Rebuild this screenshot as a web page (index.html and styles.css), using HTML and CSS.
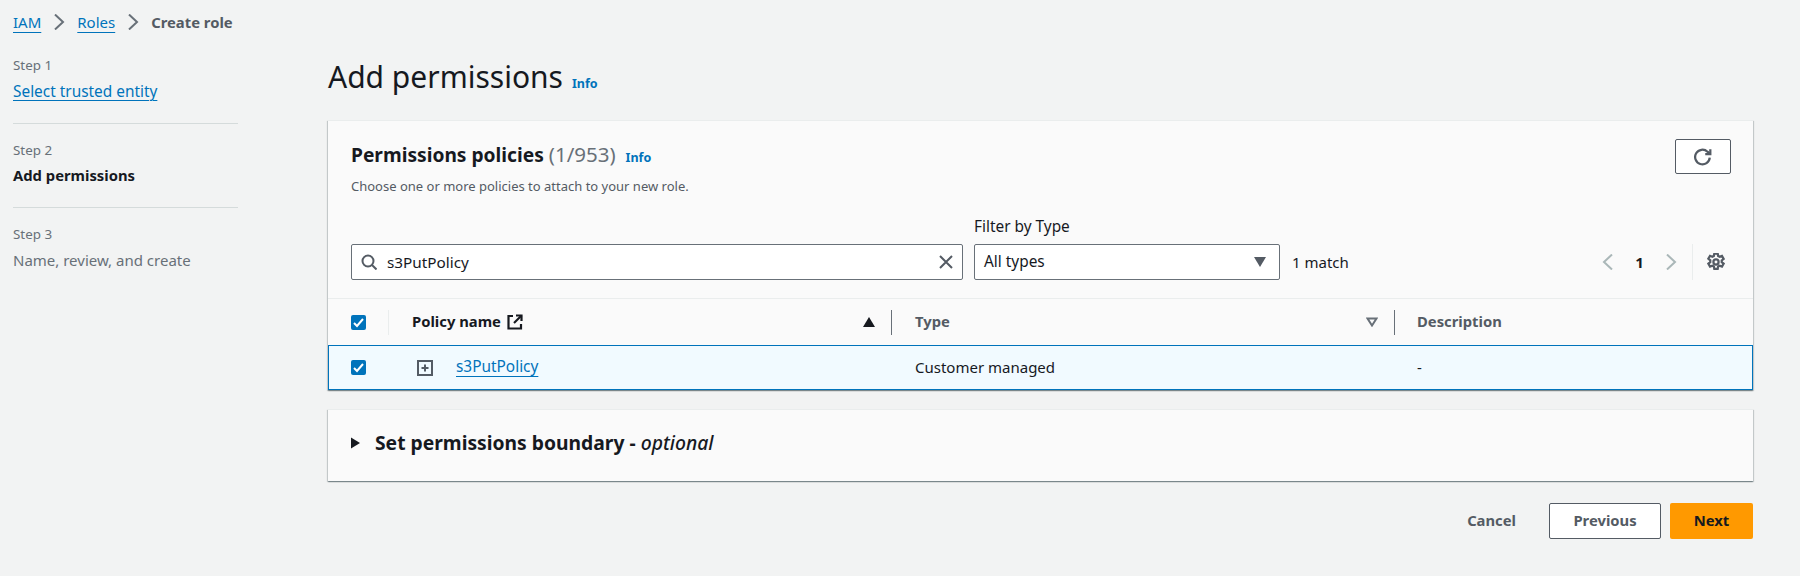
FILE: index.html
```html
<!DOCTYPE html>
<html lang="en">
    <head>
        <meta charset="UTF-8">
        <title>Create role</title>
        <link rel="stylesheet" href="styles.css">
    </head>
    <body>
        <nav class="crumbs">
            <a href="#">IAM</a>
            <svg class="icon crumb-sep" viewBox="0 0 16 16"><path d="M4 0.500L12 8l-8 7.500"/></svg>
            <a href="#">Roles</a>
            <svg class="icon crumb-sep" viewBox="0 0 16 16"><path d="M4 0.500L12 8l-8 7.500"/></svg>
            <span class="crumb-here">Create role</span>
        </nav>

        <div class="layout">
            <aside class="steps">
                <div class="step">
                    <div class="step-num">Step 1</div>
                    <a class="step-link" href="#">Select trusted entity</a>
                </div>
                <div class="step">
                    <div class="step-num">Step 2</div>
                    <div class="step-active">Add permissions</div>
                </div>
                <div class="step">
                    <div class="step-num">Step 3</div>
                    <div class="step-todo">Name, review, and create</div>
                </div>
            </aside>

            <main class="content">
                <div class="page-head">
                    <h1>Add permissions</h1>
                    <a class="info" href="#">Info</a>
                </div>

                <section class="card">
                    <div class="card-head">
                        <div class="title-row">
                            <div>
                                <h2>Permissions policies <span class="count">(1/953)</span> <a class="info" href="#">Info</a></h2>
                                <p class="subtitle">Choose one or more policies to attach to your new role.</p>
                            </div>
                            <button class="btn-refresh">
                                <svg class="icon" viewBox="0 0 16 16"><path d="M14 8.500A6.500 6.500 0 1 1 12 3.300L14.500 5.500"/><path d="M14.500 1v4.500H10"/></svg>
                            </button>
                        </div>
                        <div class="filters">
                            <div class="search">
                                <svg class="icon" viewBox="0 0 16 16"><circle cx="7" cy="7" r="5.500"/><path d="M11 11l4.500 4.500"/></svg>
                                <span class="search-text">s3PutPolicy</span>
                                <svg class="icon" viewBox="0 0 16 16"><path d="M2 2l12 12M14 2L2 14"/></svg>
                            </div>
                            <div class="filter-type">
                                <label>Filter by Type</label>
                                <div class="select">
                                    <span>All types</span>
                                    <svg class="caret" viewBox="0 0 12 10"><path d="M0 0h12L6 10z"/></svg>
                                </div>
                            </div>
                            <div class="matches">1 match</div>
                            <div class="pager">
                                <svg class="icon faint" viewBox="0 0 16 16"><path d="M12 0.500L4 8l8 7.500"/></svg>
                                <span class="page-num">1</span>
                                <svg class="icon faint" viewBox="0 0 16 16"><path d="M4 0.500L12 8l-8 7.500"/></svg>
                                <span class="pager-div"></span>
                                <svg class="icon gear" viewBox="1 1 16 16"><circle cx="9" cy="9" r="2.300"/><path d="M7.500 1.500h3l.4 2.200 1.300.7 2.100-.8 1.500 2.600-1.700 1.400v1.500l1.700 1.400-1.500 2.600-2.100-.8-1.300.7-.4 2.200h-3l-.4-2.200-1.300-.7-2.100.8-1.500-2.600 1.700-1.400V7.500L2.200 6.100l1.500-2.600 2.100.8 1.300-.7z"/></svg>
                            </div>
                        </div>
                    </div>

                    <div class="table-row table-head">
                        <div class="col-check">
                            <span class="checkbox"><svg viewBox="0 0 15 15"><path d="M3 8l3 3 6-7"/></svg></span>
                        </div>
                        <div class="col-name">
                            <span class="th-label">Policy name</span>
                            <svg class="icon dark" viewBox="0 0 16 16"><path d="M9 1.500h5.500V7"/><path d="M14.500 1.500L7 9"/><path d="M6 2H1.500v12.500H14V10"/></svg>
                            <svg class="caret sort" viewBox="0 0 12 10"><path d="M6 0l6 10H0z"/></svg>
                        </div>
                        <div class="col-type">
                            <span class="th-label muted">Type</span>
                            <svg class="caret sort-off" viewBox="0 0 12 10"><path d="M1.500 1.500h9L6 8.500z"/></svg>
                        </div>
                        <div class="col-desc th-label muted">Description</div>
                    </div>
                    <div class="table-row row-selected">
                        <div class="col-check">
                            <span class="checkbox"><svg viewBox="0 0 15 15"><path d="M3 8l3 3 6-7"/></svg></span>
                        </div>
                        <div class="col-name">
                            <svg class="expand" viewBox="0 0 16 16"><rect x="1" y="1" width="14" height="14"/><path d="M8 4.500v7M4.500 8h7"/></svg>
                            <a href="#">s3PutPolicy</a>
                        </div>
                        <div class="col-type">Customer managed</div>
                        <div class="col-desc">-</div>
                    </div>
                </section>

                <section class="card boundary">
                    <svg class="arrow" viewBox="0 0 10 12"><path d="M0 0l10 6-10 6z"/></svg>
                    <h3>Set permissions boundary - <em>optional</em></h3>
                </section>

                <div class="actions">
                    <button class="btn-link">Cancel</button>
                    <button class="btn-normal">Previous</button>
                    <button class="btn-primary">Next</button>
                </div>
            </main>
        </div>
    </body>
</html>
```

FILE: styles.css
```css
* {
    box-sizing: border-box;
}

body {
    margin: 0;
    height: 576px;
    overflow: hidden;
    background-color: #f2f3f3;
    color: #16191f;
    font-family: "Noto Sans", sans-serif;
    font-size: 15px;
    line-height: 20px;
}

a {
    color: #0073bb;
    text-decoration: underline;
    text-decoration-thickness: 1px;
    text-underline-offset: 4px;
}

svg {
    display: block;
    flex: none;
}

.icon {
    width: 16px;
    height: 16px;
    fill: none;
    stroke: #545b64;
    stroke-width: 2;
}

.icon.faint {
    stroke: #aab7b8;
}

.icon.dark {
    stroke: #16191f;
    stroke-width: 2.200;
}

.icon.gear {
    width: 18px;
    height: 18px;
    stroke-width: 2;
}

.caret {
    width: 12px;
    height: 10px;
    fill: #545b64;
}

/* breadcrumbs */
.crumbs {
    display: flex;
    align-items: center;
    gap: 10px;
    height: 20px;
    margin: 12px 0 0 13px;
}

.crumb-sep {
    stroke: #687078;
}

.crumb-here {
    color: #545b64;
    font-size: 14.800px;
    font-weight: 700;
}

/* left side */
.layout {
    display: flex;
    padding-left: 13px;
}

.steps {
    width: 225px;
    margin-right: 90px;
    padding-top: 24px;
}

.step {
    padding-bottom: 21px;
    margin-bottom: 17px;
    border-bottom: 1px solid #d5dbdb;
}

.step:last-child {
    border-bottom: none;
}

.step-num {
    color: #687078;
    font-size: 13.400px;
    line-height: 18px;
    margin-bottom: 7px;
}

.step-link {
    display: inline-block;
    font-size: 15.400px;
    text-underline-offset: 3px;
}

.step-active {
    height: 20px;
    font-size: 14.800px;
    font-weight: 700;
    line-height: 18px;
}

.step-todo {
    color: #687078;
}

/* main */
.content {
    width: 1425px;
}

.page-head {
    display: flex;
    align-items: baseline;
    gap: 9px;
    height: 36px;
    margin: 27px 0 25px;
}

h1 {
    margin: 0;
    font-size: 30px;
    font-weight: 400;
    line-height: 36px;
}

.info {
    font-size: 12.500px;
    font-weight: 700;
    text-decoration: none;
}

.card {
    background-color: #fafafa;
    border-top: 1px solid #eaeded;
    box-shadow: 0 1px 1px 0 rgba(0, 28, 36, 0.3), 1px 1px 1px 0 rgba(0, 28, 36, 0.15), -1px 1px 1px 0 rgba(0, 28, 36, 0.15);
}

.card-head {
    height: 178px;
    padding: 21px 22px 0 23px;
    border-bottom: 1px solid #eaeded;
}

.title-row {
    display: flex;
    justify-content: space-between;
}

h2 {
    margin: 0;
    font-size: 19.200px;
    font-weight: 700;
    line-height: 24px;
}

.count {
    color: #687078;
    font-size: 20.500px;
    font-weight: 400;
}

h2 .info {
    margin-left: 5px;
}

.subtitle {
    margin: 8px 0 0;
    color: #545b64;
    font-size: 13px;
    line-height: 16px;
}

.btn-refresh {
    display: flex;
    align-items: center;
    justify-content: center;
    width: 56px;
    height: 35px;
    margin-top: -3px;
    background-color: #fff;
    border: 1px solid #545b64;
    border-radius: 2px;
}

.btn-refresh .icon {
    width: 18px;
    height: 18px;
}

.filters {
    display: flex;
    align-items: flex-end;
    margin-top: 23px;
}

.search {
    display: flex;
    align-items: center;
    width: 612px;
    height: 36px;
    padding: 0 8px 0 9px;
    background-color: #fff;
    border: 1px solid #687078;
    border-radius: 2px;
}

.search-text {
    flex: 1;
    margin-left: 10px;
    font-size: 15.300px;
}

.filter-type {
    margin-left: 11px;
}

.filter-type label {
    display: block;
    margin-bottom: 7px;
    font-size: 15.400px;
}

.select {
    display: flex;
    align-items: center;
    justify-content: space-between;
    width: 306px;
    height: 36px;
    padding: 0 13px 0 9px;
    background-color: #fff;
    border: 1px solid #687078;
    border-radius: 2px;
    font-size: 15.400px;
}

.matches {
    height: 36px;
    margin-left: 12px;
    line-height: 36px;
}

.pager {
    display: flex;
    align-items: center;
    height: 36px;
    margin-left: auto;
    margin-right: 6px;
}

.page-num {
    width: 47px;
    text-align: center;
    font-weight: 700;
}

.pager-div {
    width: 1px;
    height: 36px;
    margin: 0 14px 0 13px;
    background-color: #eaeded;
}

/* table */
.table-row {
    display: flex;
    align-items: center;
}

.table-head {
    height: 46px;
}

.th-label {
    padding-bottom: 3px;
    font-size: 14.800px;
    font-weight: 700;
}

.muted {
    color: #545b64;
}

.row-selected {
    height: 45px;
    background-color: #f1faff;
    border: 1px solid #0073bb;
}

.row-selected a,
.row-selected .col-type,
.row-selected .col-desc {
    padding-bottom: 2px;
}

.row-selected a {
    font-size: 15.400px;
}

.col-check {
    display: flex;
    align-items: center;
    width: 61px;
    height: 25px;
    padding-left: 23px;
    border-right: 1px solid #eaeded;
}

.row-selected .col-check {
    width: 60px;
    padding-left: 22px;
    border-right: none;
}

.checkbox {
    display: block;
    width: 15px;
    height: 15px;
    background-color: #0073bb;
    border-radius: 2px;
}

.checkbox svg {
    width: 15px;
    height: 15px;
    fill: none;
    stroke: #fff;
    stroke-width: 2;
}

.col-name {
    display: flex;
    align-items: center;
    gap: 6px;
    width: 503px;
    height: 25px;
    padding: 0 16px 0 23px;
    border-right: 1px solid #687078;
}

.row-selected .col-name {
    gap: 23px;
    padding-left: 28px;
    border-right: none;
}

.expand {
    width: 16px;
    height: 16px;
    fill: none;
    stroke: #545b64;
    stroke-width: 2;
}

.sort {
    margin-left: auto;
    fill: #16191f;
}

.col-type {
    display: flex;
    align-items: center;
    justify-content: space-between;
    width: 503px;
    height: 25px;
    padding: 0 16px 0 23px;
    border-right: 1px solid #687078;
}

.row-selected .col-type {
    border-right: none;
}

.sort-off {
    fill: none;
    stroke: #687078;
    stroke-width: 2;
}

.col-desc {
    padding-left: 22px;
}

/* boundary */
.boundary {
    display: flex;
    align-items: center;
    gap: 15px;
    height: 72px;
    margin-top: 19px;
    padding: 0 0 5px 23px;
}

.arrow {
    width: 9px;
    height: 12px;
    fill: #16191f;
}

h3 {
    margin: 0;
    font-size: 19.300px;
    font-weight: 700;
    line-height: 24px;
}

h3 em {
    font-weight: 500;
}

/* bottom buttons */
.actions {
    display: flex;
    justify-content: flex-end;
    align-items: center;
    margin-top: 22px;
}

.actions button {
    height: 36px;
    padding: 0 0 2px;
    font-family: inherit;
    font-size: 14.800px;
    font-weight: 700;
    border-radius: 2px;
}

.btn-link {
    margin-right: 33px;
    background: none;
    border: none;
    color: #545b64;
}

.btn-normal {
    width: 112px;
    margin-right: 9px;
    background-color: #fff;
    border: 1px solid #545b64;
    color: #545b64;
}

.btn-primary {
    width: 83px;
    background-color: #ff9900;
    border: none;
    color: #16191f;
}
```
